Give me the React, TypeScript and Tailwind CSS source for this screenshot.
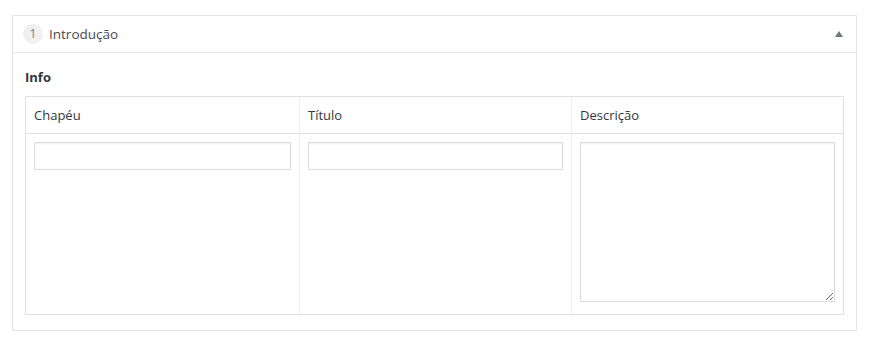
import { useState } from "react";

type Coluna = { label: string; tipo: "input" | "textarea" };

const colunas: Coluna[] = [
  { label: "Chapéu", tipo: "input" },
  { label: "Título", tipo: "input" },
  { label: "Descrição", tipo: "textarea" },
];

export default function App() {
  const [aberto, setAberto] = useState(true);

  return (
    <div className="min-h-[342px] bg-white pl-3 pr-3 pt-[15px] font-['Open_Sans',sans-serif] text-[13px] text-[#444]">
      <div className="w-[845px] border border-[#e2e4e7] bg-white">
        {/* Cabeçalho do layout */}
        <div className="flex h-[37px] items-center border-b border-[#e2e4e7] pl-[10px] pr-[9px]">
          <span className="flex h-[20px] w-[20px] items-center justify-center rounded-full bg-[#f0f0f0] text-[12px] text-[#72777c]">
            1
          </span>
          <span className="ml-[6px] text-[13.5px] text-[#444b52]">Introdução</span>
          <button
            onClick={() => setAberto(!aberto)}
            className="ml-auto flex h-4 w-4 items-center justify-center"
          >
            <svg width="8" height="6" viewBox="0 0 8 6">
              <path d="M4 0 L8 6 L0 6 Z" fill="#72777c" />
            </svg>
          </button>
        </div>

        {aberto && (
          <div className="px-3 pb-[15px] pt-[15px]">
            <p className="mb-[10px] text-[13px] font-bold leading-[18px] text-[#32373c]">Info</p>
            <div className="grid grid-cols-[273px_272px_1fr] border border-[#e1e1e1]">
              {colunas.map((c, i) => (
                <div
                  key={c.label}
                  className={`flex h-[37px] items-center border-b border-[#e1e1e1] px-2 pt-px text-[#32373c] ${
                    i > 0 ? "border-l border-l-[#eeeeee]" : ""
                  }`}
                >
                  {c.label}
                </div>
              ))}
              {colunas.map((c, i) => (
                <div
                  key={c.label + "-campo"}
                  className={`h-[180px] px-2 pt-2 ${i > 0 ? "border-l border-[#eeeeee]" : ""}`}
                >
                  {c.tipo === "input" ? (
                    <input
                      type="text"
                      className="h-[28px] w-full border border-[#dddddd] bg-white px-2 shadow-[inset_0_1px_2px_rgba(0,0,0,0.07)] outline-none"
                    />
                  ) : (
                    <textarea className="block h-[160px] w-full resize-y border border-[#dddddd] bg-white px-2 shadow-[inset_0_1px_2px_rgba(0,0,0,0.07)] outline-none" />
                  )}
                </div>
              ))}
            </div>
          </div>
        )}
      </div>
    </div>
  );
}
